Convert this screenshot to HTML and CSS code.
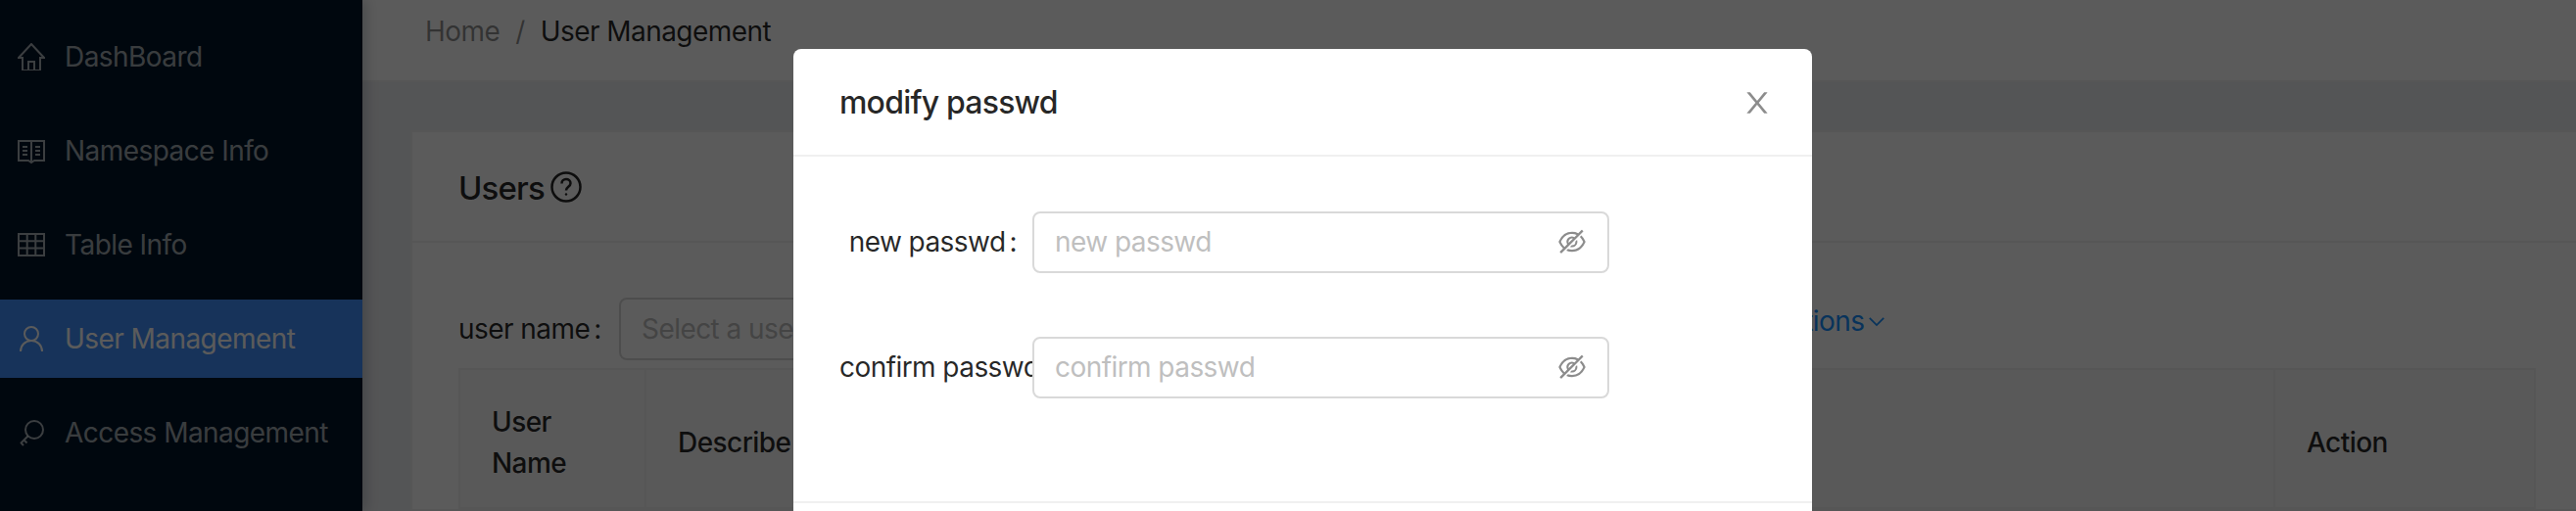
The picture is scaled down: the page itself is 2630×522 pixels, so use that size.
FILE: index.html
```html
<!doctype html>
<html lang="en">
  <head>
    <meta charset="UTF-8" />
    <title>User Management</title>
    <link rel="stylesheet" href="styles.css">
  </head>
  <body>
    <div class="layout">
      <aside class="sider">
        <ul class="menu">
          <li class="menu-item">
            <svg class="menu-icon" viewBox="0 0 28 28"><path d="M1 15 14 1l13 14h-4v13H5V15z M11 28v-9h6v9"/></svg>
            DashBoard
          </li>
          <li class="menu-item">
            <svg class="menu-icon" viewBox="0 0 28 28"><path d="M1 4h26v20H17l-3 2-3-2H1z M14 5v20 M5 10h5 M5 14h5 M5 18h5 M18 10h5 M18 14h5 M18 18h5"/></svg>
            Namespace Info
          </li>
          <li class="menu-item">
            <svg class="menu-icon" viewBox="0 0 28 28"><path d="M1 3h26v22H1z M1 10.300h26 M1 17.600h26 M9.700 3v22 M18.300 3v22"/></svg>
            Table Info
          </li>
          <li class="menu-item active">
            <svg class="menu-icon" viewBox="0 0 28 28"><circle cx="14" cy="9" r="7"/><path d="M3 27c0-6 4.500-11 11-11s11 5 11 11"/></svg>
            User Management
          </li>
          <li class="menu-item">
            <svg class="menu-icon" viewBox="0 0 28 28"><circle cx="17" cy="11" r="9"/><path d="M10.500 17.500 3 25 M6.500 21.500l3 3 M3.500 24.500l2.500 2.500"/></svg>
            Access Management
          </li>
        </ul>
      </aside>

      <div class="main">
        <header class="topbar">
          <span class="crumb-link">Home</span>
          <span class="crumb-sep">/</span>
          <span class="crumb-current">User Management</span>
        </header>

        <section class="content">
          <div class="card">
            <div class="card-head">
              <span class="card-title">Users</span>
              <svg class="help-icon" viewBox="0 0 32 32"><circle cx="16" cy="16" r="14.500"/><path d="M11.500 12.500c0-2.800 2-4.500 4.500-4.500s4.500 1.700 4.500 4.200c0 3.600-4.500 3.500-4.500 7.300"/><circle class="dot" cx="16" cy="23.500" r="1.200"/></svg>
            </div>
            <div class="card-body">
              <div class="search-row">
                <span class="search-label">user name<span class="colon">:</span></span>
                <div class="search-select">Select a user</div>
                <a class="more-link">
                  Advanced Options
                  <svg class="chevron" viewBox="0 0 20 12"><path d="M2 2l8 8 8-8"/></svg>
                </a>
              </div>
              <table class="users-table">
                <thead>
                  <tr>
                    <th class="col-name">User Name</th>
                    <th>Describe</th>
                    <th class="col-action">Action</th>
                  </tr>
                </thead>
              </table>
            </div>
          </div>
        </section>
      </div>
    </div>

    <div class="mask"></div>

    <div class="modal">
      <div class="modal-head">
        <span class="modal-title">modify passwd</span>
        <svg class="modal-close" viewBox="0 0 1024 1024"><path d="M563.8 512l262.5-312.9c4.400-5.200.7-13.100-6.100-13.100h-79.800c-4.700 0-9.200 2.100-12.300 5.700L511.600 449.800 295.100 191.700c-3-3.600-7.500-5.700-12.300-5.700H203c-6.800 0-10.500 7.900-6.100 13.100L459.400 512 196.900 824.900A7.950 7.950 0 00203 838h79.800c4.700 0 9.200-2.100 12.300-5.700l216.500-258.100 216.500 258.100c3 3.600 7.500 5.700 12.300 5.700h79.800c6.800 0 10.500-7.900 6.100-13.100L563.800 512z"/></svg>
      </div>
      <div class="modal-body">
        <div class="form-row">
          <label class="form-label">new passwd<span class="colon">:</span></label>
          <div class="pass-input">
            <span class="placeholder">new passwd</span>
            <svg class="eye" viewBox="0 0 1024 1024"><path d="M942.200 486.200Q889.470 375.110 816.700 305l-50.880 50.880C807.310 395.530 843.450 447.400 874.700 512 791.500 684.200 673.400 766 512 766q-72.670 0-133.870-22.380L323 798.750Q408 838 512 838q288.300 0 430.200-300.300a60.290 60.290 0 000-51.500zm-63.570-320.640L836 122.880a8 8 0 00-11.320 0L715.310 232.200Q624.860 186 512 186q-288.300 0-430.200 300.300a60.300 60.300 0 000 51.500q56.690 119.400 136.500 191.410L112.480 835a8 8 0 000 11.310L155.170 889a8 8 0 0011.310 0l712.150-712.120a8 8 0 000-11.320zM149.300 512C232.600 339.800 350.700 258 512 258c54.540 0 104.130 9.360 149.120 28.390l-70.300 70.300a176 176 0 00-238.130 238.130l-83.420 83.420C223.100 637.490 183.300 582.280 149.300 512zm246.700 0a112.110 112.110 0 01146.200-106.690L401.310 546.200A112 112 0 01396 512z M508 624c-3.460 0-6.870-.16-10.250-.47l-52.820 52.820a176.090 176.090 0 00227.420-227.420l-52.820 52.820c.31 3.380.47 6.790.47 10.250a111.940 111.940 0 01-112 112z"/></svg>
          </div>
        </div>
        <div class="form-row">
          <label class="form-label">confirm passwd<span class="colon">:</span></label>
          <div class="pass-input">
            <span class="placeholder">confirm passwd</span>
            <svg class="eye" viewBox="0 0 1024 1024"><path d="M942.200 486.200Q889.470 375.110 816.700 305l-50.880 50.880C807.310 395.530 843.450 447.400 874.700 512 791.500 684.200 673.400 766 512 766q-72.670 0-133.870-22.380L323 798.750Q408 838 512 838q288.300 0 430.200-300.300a60.290 60.290 0 000-51.500zm-63.570-320.640L836 122.880a8 8 0 00-11.320 0L715.310 232.200Q624.860 186 512 186q-288.300 0-430.200 300.300a60.300 60.300 0 000 51.500q56.690 119.400 136.500 191.410L112.480 835a8 8 0 000 11.310L155.170 889a8 8 0 0011.310 0l712.150-712.120a8 8 0 000-11.320zM149.300 512C232.600 339.800 350.700 258 512 258c54.540 0 104.130 9.360 149.120 28.390l-70.300 70.300a176 176 0 00-238.130 238.130l-83.420 83.420C223.100 637.490 183.300 582.280 149.300 512zm246.700 0a112.110 112.110 0 01146.200-106.690L401.310 546.200A112 112 0 01396 512z M508 624c-3.460 0-6.870-.16-10.250-.47l-52.820 52.820a176.090 176.090 0 00227.420-227.420l-52.820 52.820c.31 3.380.47 6.790.47 10.250a111.940 111.940 0 01-112 112z"/></svg>
          </div>
        </div>
      </div>
      <div class="modal-foot"></div>
    </div>
  </body>
</html>
```

FILE: styles.css
```css
html,
body {
  height: 522px;
  margin: 0;
  overflow: hidden;
}

body {
  font-family: Inter, "Liberation Sans", sans-serif;
  font-size: 28px;
  letter-spacing: -0.02em;
  color: rgba(0, 0, 0, 0.85);
  background: #ecedf0;
}

.layout {
  display: flex;
  width: 2630px;
  height: 522px;
}

/* sidebar */
.sider {
  flex: none;
  width: 370px;
  background: #001529;
  box-shadow: 4px 0 12px rgba(0, 21, 41, 0.2);
  position: relative;
}

.menu {
  list-style: none;
  margin: 0;
  padding: 18px 0 0;
}

.menu-item {
  display: flex;
  align-items: center;
  gap: 20px;
  height: 80px;
  margin-bottom: 16px;
  padding-left: 18px;
  color: rgba(255, 255, 255, 0.65);
}

.menu-item.active {
  background: #408ffc;
  color: #fff;
}

.menu-icon {
  flex: none;
  width: 28px;
  height: 28px;
  fill: none;
  stroke: currentColor;
  stroke-width: 2;
}

/* main */
.main {
  flex: 1;
  min-width: 0;
}

.topbar {
  display: flex;
  align-items: center;
  gap: 16px;
  height: 84px;
  padding: 0 0 18px 64px;
  box-sizing: border-box;
  background: #fff;
  border-bottom: 2px solid #f0f0f0;
  color: rgba(0, 0, 0, 0.45);
}

.crumb-current {
  color: rgba(0, 0, 0, 0.85);
}

.content {
  padding: 49px 0 0 49px;
}

.card {
  width: 2219px;
  background: #fff;
  border: 2px solid #f0f0f0;
}

.card-head {
  display: flex;
  align-items: center;
  gap: 6px;
  height: 111px;
  padding-left: 47px;
  border-bottom: 2px solid #f0f0f0;
}

.card-title {
  font-size: 33px;
  font-weight: 500;
  letter-spacing: -0.025em;
  padding-top: 2px;
}

.help-icon {
  width: 32px;
  height: 32px;
  fill: none;
  stroke: currentColor;
  stroke-width: 2.500;
}

.help-icon .dot {
  fill: currentColor;
  stroke: none;
}

.card-body {
  padding: 56px 47px 0;
}

.colon {
  margin: 0 16px 0 4px;
}

.search-row {
  display: flex;
  align-items: center;
  height: 64px;
  margin-bottom: 8px;
}

.search-label {
  width: 164px;
  flex: none;
  white-space: nowrap;
}

.search-select {
  width: 600px;
  height: 64px;
  box-sizing: border-box;
  padding: 0 21px;
  line-height: 60px;
  border: 2px solid #d9d9d9;
  border-radius: 8px;
  color: #bfbfbf;
}

.more-link {
  display: flex;
  align-items: center;
  gap: 4px;
  margin-left: 436px;
  margin-top: -16px;
  color: #1890ff;
}

.chevron {
  width: 18px;
  height: 11px;
  fill: none;
  stroke: currentColor;
  stroke-width: 2;
}

.users-table {
  width: 2121px;
  table-layout: fixed;
  border-collapse: collapse;
  background: #fafafa;
  border: 2px solid #f0f0f0;
}

.users-table th {
  padding: 32px 32px 24px;
  text-align: left;
  font-weight: 500;
  line-height: 42px;
  border-right: 2px solid #f0f0f0;
}

.col-name {
  width: 124px;
}

.col-action {
  width: 200px;
}

/* modal */
.mask {
  position: absolute;
  inset: 0;
  background: rgba(0, 0, 0, 0.643);
}

.modal {
  position: absolute;
  top: 50px;
  left: 810px;
  width: 1040px;
  background: #fff;
  border-radius: 8px;
}

.modal-head {
  display: flex;
  align-items: center;
  justify-content: space-between;
  height: 108px;
  padding: 0 39px 0 47px;
  border-bottom: 2px solid #f0f0f0;
}

.modal-title {
  font-size: 32px;
  font-weight: 500;
  letter-spacing: -0.025em;
}

.modal-close {
  width: 34px;
  height: 34px;
  margin-top: 2px;
  fill: rgba(0, 0, 0, 0.45);
}

.modal-body {
  display: flex;
  flex-direction: column;
  gap: 64px;
  height: 352px;
  box-sizing: border-box;
  padding: 55px 0 0 47px;
}

.form-row {
  display: flex;
  align-items: center;
  height: 64px;
}

.form-label {
  flex: none;
  width: 197px;
  overflow: hidden;
  white-space: nowrap;
  text-align: right;
}

.pass-input {
  display: flex;
  align-items: center;
  justify-content: space-between;
  width: 589px;
  height: 63px;
  box-sizing: border-box;
  padding: 0 20px 0 21px;
  border: 2px solid #d9d9d9;
  border-radius: 8px;
}

.placeholder {
  color: #bfbfbf;
}

.eye {
  width: 32px;
  height: 32px;
  fill: rgba(0, 0, 0, 0.45);
}

.modal-foot {
  height: 60px;
  border-top: 2px solid #f0f0f0;
}
```
